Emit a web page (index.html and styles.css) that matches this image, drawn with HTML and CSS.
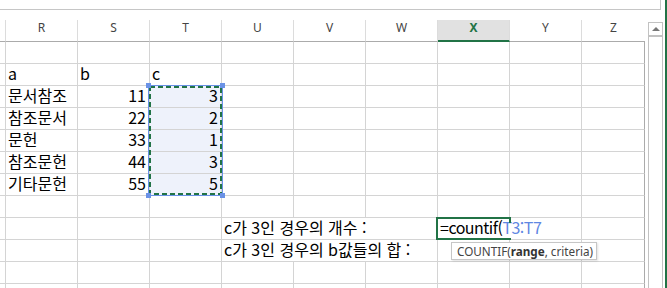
FILE: index.html
```html
<!DOCTYPE html>
<html lang="ko">
<head>
<meta charset="utf-8">
<title>Sheet</title>
<link rel="stylesheet" href="styles.css">
</head>
<body>
<div class="app">
  <div class="main">
    <div class="fbar"></div>
    <div class="work">
      <div class="sheet">
        <!-- header -->
        <div class="h"></div><div class="h">R</div><div class="h">S</div><div class="h">T</div><div class="h">U</div><div class="h">V</div><div class="h">W</div><div class="h hx">X</div><div class="h">Y</div><div class="h hz">Z</div>
        <!-- row 1 -->
        <div class="c"></div><div class="c"></div><div class="c"></div><div class="c"></div><div class="c"></div><div class="c"></div><div class="c"></div><div class="c"></div><div class="c"></div><div class="c z"></div>
        <!-- row 2 -->
        <div class="c"></div><div class="c">a</div><div class="c">b</div><div class="c">c</div><div class="c"></div><div class="c"></div><div class="c"></div><div class="c"></div><div class="c"></div><div class="c z"></div>
        <!-- row 3 -->
        <div class="c"></div><div class="c">문서참조</div><div class="c n">11</div><div class="c n s">3</div><div class="c"></div><div class="c"></div><div class="c"></div><div class="c"></div><div class="c"></div><div class="c z"></div>
        <!-- row 4 -->
        <div class="c"></div><div class="c">참조문서</div><div class="c n">22</div><div class="c n s">2</div><div class="c"></div><div class="c"></div><div class="c"></div><div class="c"></div><div class="c"></div><div class="c z"></div>
        <!-- row 5 -->
        <div class="c"></div><div class="c">문헌</div><div class="c n">33</div><div class="c n s">1</div><div class="c"></div><div class="c"></div><div class="c"></div><div class="c"></div><div class="c"></div><div class="c z"></div>
        <!-- row 6 -->
        <div class="c"></div><div class="c">참조문헌</div><div class="c n">44</div><div class="c n s">3</div><div class="c"></div><div class="c"></div><div class="c"></div><div class="c"></div><div class="c"></div><div class="c z"></div>
        <!-- row 7 -->
        <div class="c"></div><div class="c">기타문헌</div><div class="c n">55</div><div class="c n s">5</div><div class="c"></div><div class="c"></div><div class="c"></div><div class="c"></div><div class="c"></div><div class="c z"></div>
        <!-- row 8 -->
        <div class="c"></div><div class="c"></div><div class="c"></div><div class="c"></div><div class="c"></div><div class="c"></div><div class="c"></div><div class="c"></div><div class="c"></div><div class="c z"></div>
        <!-- row 9 -->
        <div class="c"></div><div class="c"></div><div class="c"></div><div class="c"></div><div class="c span3">c가 3인 경우의 개수 :</div><div class="c span2 edit">=countif(<span class="ref">T3:T7</span></div><div class="c z"></div>
        <!-- row 10 -->
        <div class="c"></div><div class="c"></div><div class="c"></div><div class="c"></div><div class="c span3">c가 3인 경우의 b값들의 합 :</div><div class="c"></div><div class="c"></div><div class="c z"></div>
        <!-- row 11 -->
        <div class="c"></div><div class="c"></div><div class="c"></div><div class="c"></div><div class="c"></div><div class="c"></div><div class="c"></div><div class="c"></div><div class="c"></div><div class="c z"></div>
        <!-- row 12 -->
        <div class="c"></div><div class="c"></div><div class="c"></div><div class="c"></div><div class="c"></div><div class="c"></div><div class="c"></div><div class="c"></div><div class="c"></div><div class="c z"></div>

        <!-- overlays -->
        <div class="range">
          <svg class="ants" width="73" height="109" viewBox="0 0 73 109"><rect x="1" y="1" width="71" height="107" fill="none" stroke="#217346" stroke-width="2" stroke-dasharray="5 3"/></svg>
          <span class="hd tl"></span><span class="hd tr"></span><span class="hd bl"></span><span class="hd br"></span>
        </div>
        <div class="active"></div>
        <div class="tip">COUNTIF(<b>range</b>, criteria)</div>
      </div>
      <div class="vscroll">
        <div class="vs-btn"><span class="tri"></span></div>
        <div class="vs-track"></div>
      </div>
    </div>
  </div>
  <div class="frame"></div>
</div>
</body>
</html>
```
FILE: styles.css
```css
html, body {
  margin: 0;
  padding: 0;
  background: #fff;
}
.app {
  display: flex;
  width: 667px;
  height: 288px;
  overflow: hidden;
}
.main {
  width: 665px;
  display: flex;
  flex-direction: column;
}
.fbar {
  width: 661px;
  height: 10px;
  box-sizing: border-box;
  border-right: 1px solid #c6c6c6;
  border-bottom: 1px solid #c6c6c6;
  flex: none;
}
.work {
  margin-top: 10px;
  display: flex;
  gap: 3px;
  flex: 1;
  min-height: 0;
}
.sheet {
  position: relative;
  display: grid;
  grid-template-columns: 6px repeat(8, 72px) 63px;
  grid-auto-rows: 22px;
  width: 645px;
  font-family: "Noto Sans CJK KR", "Noto Sans", sans-serif;
  font-size: 16px;
  color: #000;
}
.h {
  box-sizing: border-box;
  border-right: 1px solid #dcdcdc;
  border-bottom: 1px solid #ababab;
  display: flex;
  align-items: center;
  justify-content: center;
  font-family: "Noto Sans", sans-serif;
  font-size: 12px;
  line-height: 14px;
  color: #444;
  padding-bottom: 5px;
}
.hx {
  background: #e1e1e1;
  border-bottom: 2px solid #217346;
  color: #217346;
  font-weight: bold;
  padding-bottom: 4px;
}
.hz {
  border-right: none;
}
.c {
  box-sizing: border-box;
  border-right: 1px solid #d4d4d4;
  border-bottom: 1px solid #d4d4d4;
  display: flex;
  align-items: flex-end;
  padding: 0 2px 2px 2px;
  line-height: 19px;
  white-space: nowrap;
  overflow: visible;
  min-width: 0;
}
.n {
  justify-content: flex-end;
  padding-right: 3px;
}
.s {
  background: #eef2fb;
}
.z {
  border-right-color: #ababab;
}
.span3 {
  grid-column: span 3;
}
.span2 {
  grid-column: span 2;
}
.edit {
  letter-spacing: -0.5px;
}
.ref {
  color: #5f87e3;
}
.range {
  position: absolute;
  left: 148px;
  top: 65px;
  width: 75px;
  height: 111px;
  box-sizing: border-box;
  border: 1px solid #6a92e6;
}
.ants {
  position: absolute;
  left: 0;
  top: 0;
  display: block;
}
.hd {
  position: absolute;
  width: 5px;
  height: 5px;
  background: #6a92e6;
}
.hd.tl { left: -3px; top: -3px; }
.hd.tr { right: -3px; top: -3px; }
.hd.bl { left: -3px; bottom: -3px; }
.hd.br { right: -3px; bottom: -3px; }
.active {
  position: absolute;
  left: 436px;
  top: 197px;
  width: 75px;
  height: 23px;
  box-sizing: border-box;
  border: 2px solid #217346;
  border-right: none;
}
.active::after {
  content: "";
  position: absolute;
  right: 0;
  top: -2px;
  width: 2px;
  height: 6px;
  background: #217346;
}
.tip {
  position: absolute;
  left: 451px;
  top: 222px;
  width: 146px;
  height: 18px;
  box-sizing: border-box;
  border: 1px solid #c6c6c6;
  background: #fff;
  box-shadow: 1px 1px 2px rgba(0, 0, 0, 0.12);
  font-family: "Noto Sans", sans-serif;
  font-size: 11.7px;
  line-height: 16px;
  color: #444;
  padding-left: 5px;
  white-space: nowrap;
}
.tip b {
  color: #333;
}
.vscroll {
  width: 15px;
  margin-top: 2px;
  box-sizing: border-box;
  border: 1px solid #c2c2c2;
  border-bottom: none;
  display: flex;
  flex-direction: column;
}
.vs-btn {
  height: 14px;
  box-sizing: border-box;
  border-bottom: 2px solid #c2c2c2;
  display: flex;
  align-items: center;
  justify-content: center;
}
.tri {
  width: 0;
  height: 0;
  border-left: 4px solid transparent;
  border-right: 4px solid transparent;
  border-bottom: 4px solid #777;
}
.vs-track {
  flex: 1;
}
.frame {
  width: 2px;
  background: #217346;
}
```
